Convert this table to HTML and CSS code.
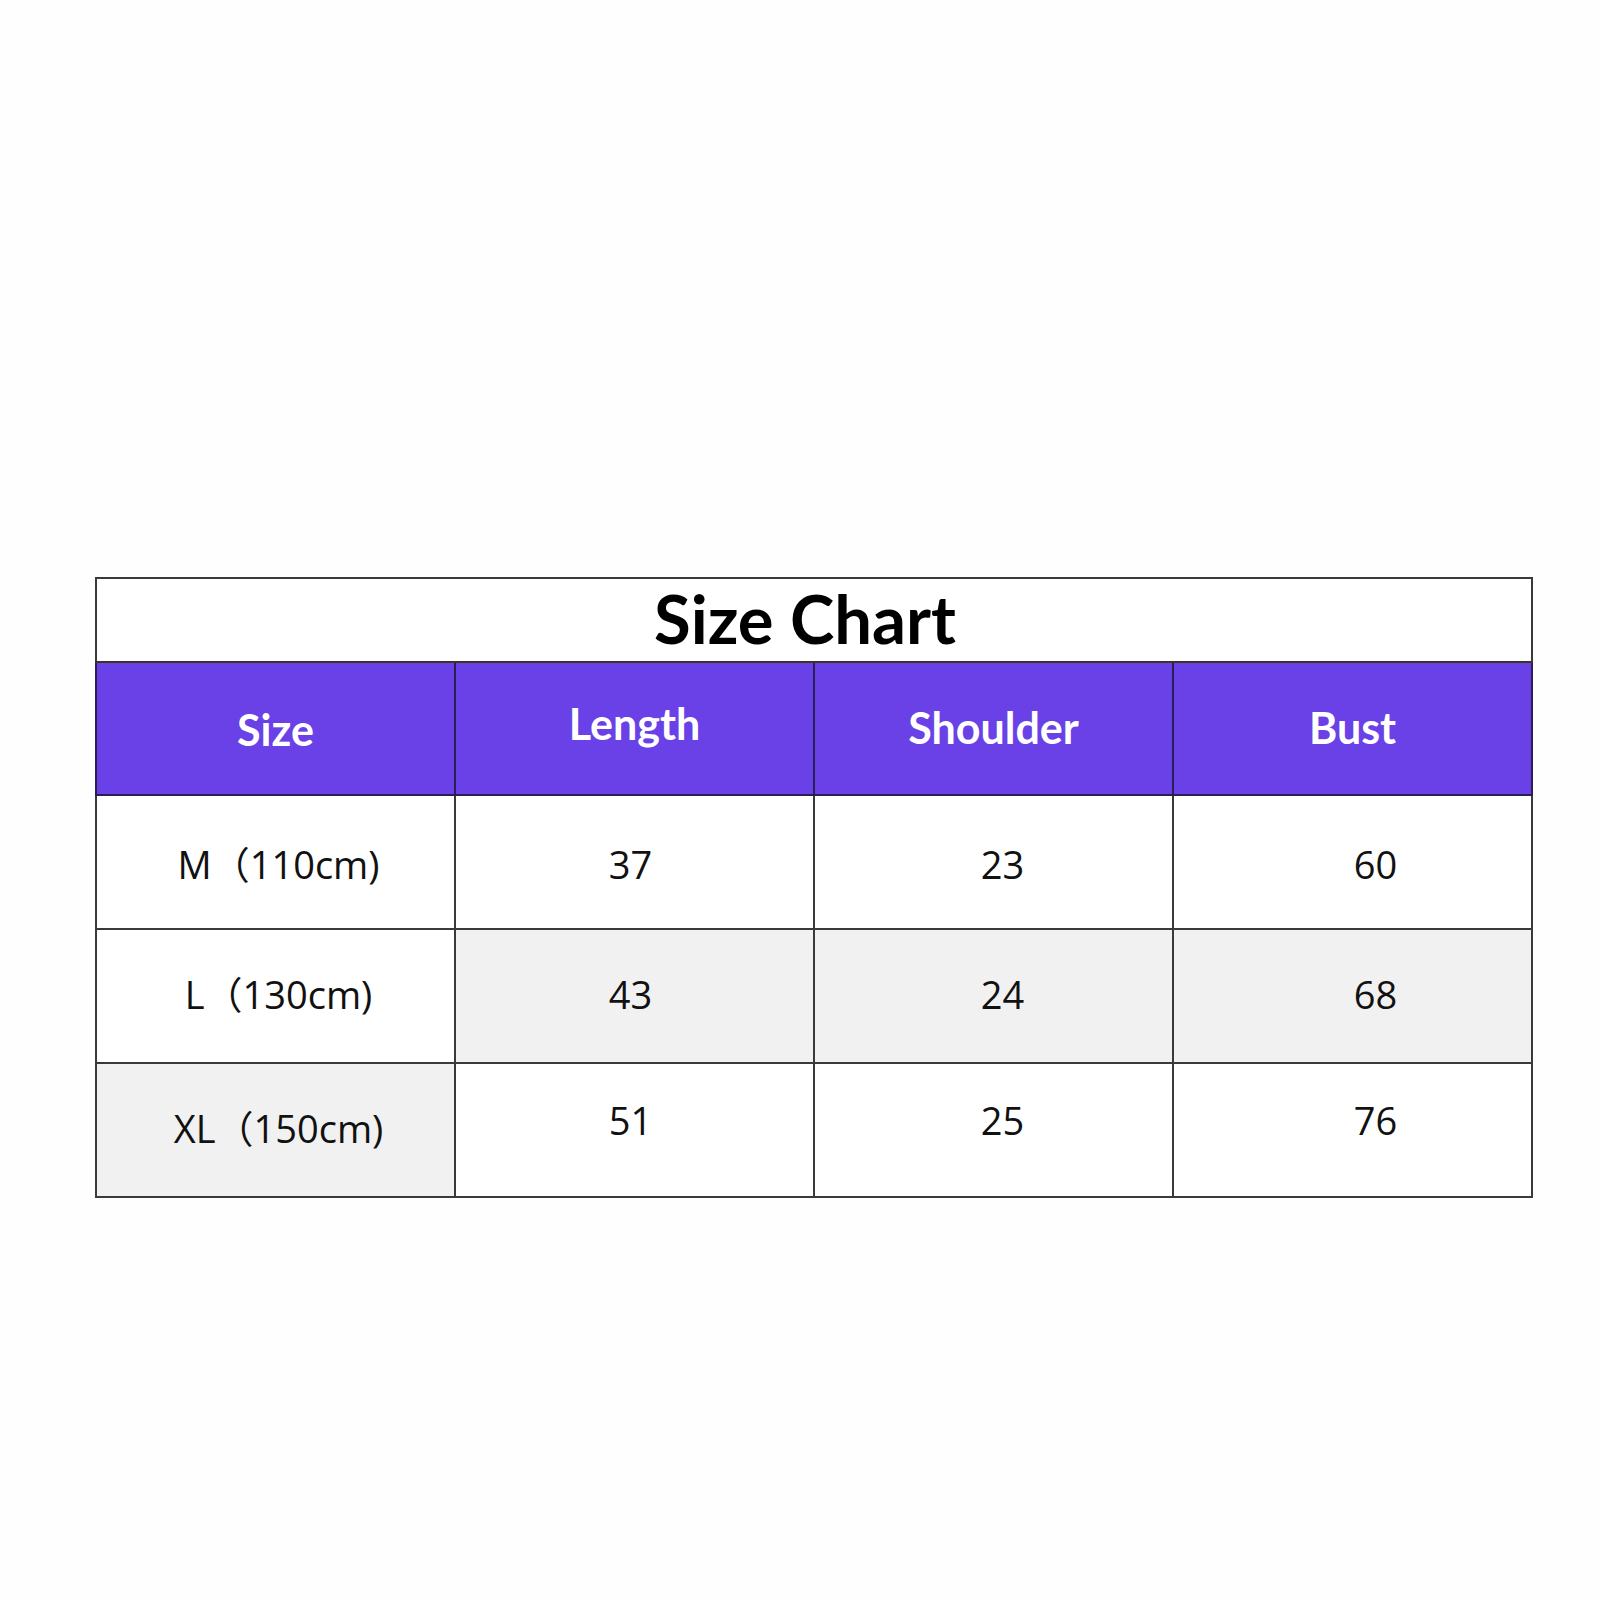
FILE: index.html
```html
<!DOCTYPE html>
<html>
<head>
<meta charset="utf-8">
<link rel="stylesheet" href="styles.css">
</head>
<body>
<div class="page">
  <table class="chart">
    <tr class="title-row"><td colspan="4" class="title">Size Chart</td></tr>
    <tr class="head-row">
      <th class="h-size">Size</th>
      <th class="h-length">Length</th>
      <th class="h-shoulder">Shoulder</th>
      <th class="h-bust">Bust</th>
    </tr>
    <tr class="row r1">
      <td class="c-size">M（110cm)</td>
      <td class="c-length">37</td>
      <td class="c-shoulder">23</td>
      <td class="c-bust">60</td>
    </tr>
    <tr class="row r2">
      <td class="c-size">L（130cm)</td>
      <td class="c-length grey">43</td>
      <td class="c-shoulder grey">24</td>
      <td class="c-bust grey">68</td>
    </tr>
    <tr class="row r3">
      <td class="c-size grey">XL（150cm)</td>
      <td class="c-length raised">51</td>
      <td class="c-shoulder raised">25</td>
      <td class="c-bust raised">76</td>
    </tr>
  </table>
</div>
</body>
</html>
```
FILE: styles.css
```css
html, body {
  margin: 0;
  padding: 0;
  background: #fefefe;
}
.page {
  padding: 577px 0 0 95px;
}
.chart {
  width: 1438px;
  border-collapse: collapse;
  table-layout: fixed;
  border: 2px solid #5a5a5a;
}
.chart td, .chart th {
  box-sizing: border-box;
  border: 2px solid #3a3a3a;
  padding: 0;
  text-align: center;
  vertical-align: middle;
}
.title-row td {
  height: 84px;
  background: #fff;
  font-family: "Lato", "Inter", sans-serif;
  font-weight: 700;
  font-size: 67px;
  color: #000;
  border-bottom-color: #3a3424;
  padding-right: 18px;
  padding-bottom: 4px;
  line-height: 1;
}
.head-row th {
  height: 133px;
  background: #6941e7;
  color: #fff;
  font-family: "Lato", "Inter", sans-serif;
  font-weight: 700;
  font-size: 43px;
  border-color: #2a1f55;
  line-height: 1;
  padding-bottom: 3px;
}
.head-row th.h-size { padding-bottom: 0; padding-top: 2px; }
.head-row th.h-length { padding-bottom: 10px; }
.row td {
  height: 134px;
  background: #fff;
  font-family: "Open Sans", "Noto Sans CJK SC", sans-serif;
  font-size: 38px;
  color: #111;
  line-height: 1;
  padding-bottom: 4px;
}
.row.r1 td { padding-bottom: 0; padding-top: 4px; }
.row td.grey { background: #f1f1f1; }
.row td.c-size { padding-left: 6px; }
.row td.c-length { padding-right: 8px; }
.row td.c-shoulder { padding-left: 18px; }
.row td.c-bust { padding-left: 46px; }
.row td.raised { padding-bottom: 20px; }
```
